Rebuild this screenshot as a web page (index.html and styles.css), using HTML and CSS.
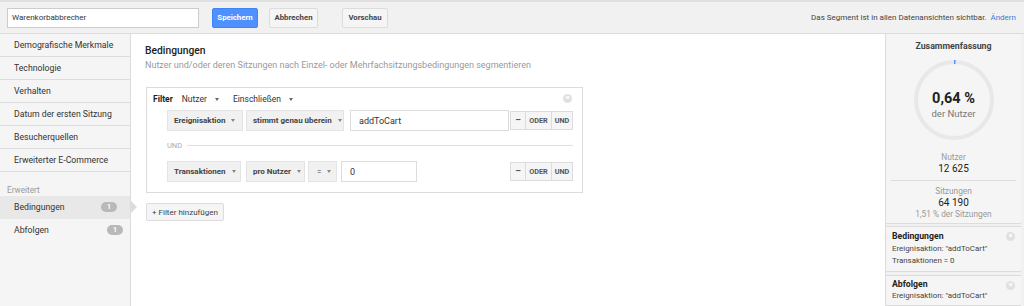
FILE: index.html
```html
<!doctype html>
<html lang="de">
  <head>
    <meta charset="UTF-8" />
    <title>Segment bearbeiten</title>
    <link rel="stylesheet" href="styles.css">
  </head>
  <body>
    <!-- Top bar -->
    <div class="topbar">
      <input type="text" class="segment-name" value="Warenkorbabbrecher" />
      <button class="btn btn-primary">Speichern</button>
      <button class="btn btn-cancel">Abbrechen</button>
      <button class="btn btn-preview">Vorschau</button>
      <div class="visibility">Das Segment ist in allen Datenansichten sichtbar. <a href="#">Ändern</a></div>
    </div>

    <div class="layout">
      <!-- Sidebar -->
      <div class="sidebar">
        <div class="nav-item">Demografische Merkmale</div>
        <div class="nav-item">Technologie</div>
        <div class="nav-item">Verhalten</div>
        <div class="nav-item">Datum der ersten Sitzung</div>
        <div class="nav-item">Besucherquellen</div>
        <div class="nav-item">Erweiterter E-Commerce</div>
        <div class="nav-group">Erweitert</div>
        <div class="nav-item nav-sub active">Bedingungen <span class="badge">1</span></div>
        <div class="nav-item nav-sub">Abfolgen <span class="badge">1</span></div>
      </div>

      <!-- Main -->
      <div class="main">
        <h2>Bedingungen</h2>
        <p class="subtitle">Nutzer und/oder deren Sitzungen nach Einzel- oder Mehrfachsitzungsbedingungen segmentieren</p>

        <div class="filter-box">
          <div class="filter-head">
            <b>Filter</b>
            <span class="dd">Nutzer <i class="caret"></i></span>
            <span class="dd">Einschließen <i class="caret"></i></span>
            <span class="close"></span>
          </div>

          <div class="cond-row">
            <span class="sel w-event">Ereignisaktion <i class="caret"></i></span>
            <span class="sel w-match">stimmt genau überein <i class="caret"></i></span>
            <input type="text" class="val val-wide" value="addToCart" />
            <div class="ops"><span class="op op-minus">–</span><span class="op">ODER</span><span class="op">UND</span></div>
          </div>

          <div class="und-sep"><span>UND</span></div>

          <div class="cond-row">
            <span class="sel w-trans">Transaktionen <i class="caret"></i></span>
            <span class="sel w-per">pro Nutzer <i class="caret"></i></span>
            <span class="sel w-eq">= <i class="caret"></i></span>
            <input type="text" class="val val-narrow" value="0" />
            <div class="ops"><span class="op op-minus">–</span><span class="op">ODER</span><span class="op">UND</span></div>
          </div>
        </div>

        <button class="btn btn-add">+ Filter hinzufügen</button>
      </div>

      <!-- Summary -->
      <div class="summary">
        <div class="summary-box">
          <div class="summary-title">Zusammenfassung</div>
          <div class="ring">
            <svg width="80" height="80" viewBox="0 0 80 80">
              <circle cx="40" cy="40" r="38" fill="none" stroke="#e8e8e8" stroke-width="4" />
              <path d="M40 2 A38 38 0 0 1 41.5 2.03" fill="none" stroke="#4d90fe" stroke-width="4" />
            </svg>
            <div class="ring-text">
              <div class="ring-value">0,64 %</div>
              <div class="ring-label">der Nutzer</div>
            </div>
          </div>
          <div class="stat">
            <div class="stat-label">Nutzer</div>
            <div class="stat-value">12 625</div>
          </div>
          <div class="stat stat-sessions">
            <div class="stat-label">Sitzungen</div>
            <div class="stat-value">64 190</div>
            <div class="stat-label">1,51 % der Sitzungen</div>
          </div>
        </div>
        <div class="card">
          <span class="close"></span>
          <b>Bedingungen</b>
          <div>Ereignisaktion: "addToCart"</div>
          <div>Transaktionen = 0</div>
        </div>
        <div class="card">
          <span class="close"></span>
          <b>Abfolgen</b>
          <div>Ereignisaktion: "addToCart"</div>
        </div>
      </div>
    </div>
  </body>
</html>
```

FILE: styles.css
```css
body {
  margin: 0;
  font-family: Roboto, Arial, sans-serif;
  font-size: 8.7px;
  color: #333;
  background: #f1f1f1;
  height: 306px;
  overflow: hidden;
}
.topbar {
  display: flex;
  align-items: center;
  height: 31px;
  padding: 0 7px;
  border-top: 2px solid #e0e0e0;
  border-bottom: 1px solid #dcdcdc;
  background: #f1f1f1;
}
.segment-name {
  width: 192px;
  height: 20px;
  box-sizing: border-box;
  border: 1px solid #ccc;
  padding: 0 4px;
  font-family: inherit;
  font-size: 8px;
  color: #333;
  margin-right: 13px;
}
.btn {
  height: 20px;
  padding: 0;
  font-family: inherit;
  font-size: 7.8px;
  font-weight: bold;
  color: #444;
  background: #f5f5f5;
  border: 1px solid #dcdcdc;
  border-radius: 2px;
  cursor: pointer;
}
.btn-primary {
  width: 46px;
  background: #4d90fe;
  border-color: #3f85f7;
  color: #fff;
  margin-right: 11px;
}
.btn-cancel {
  width: 49px;
  margin-right: 24px;
}
.btn-preview {
  width: 46px;
}
.visibility {
  margin-left: auto;
  margin-right: 1px;
  color: #444;
  font-size: 8px;
  white-space: nowrap;
}
.visibility a {
  color: #3a7ad5;
  text-decoration: none;
  margin-left: 2px;
}
.layout {
  display: flex;
  height: 272px;
}
.sidebar {
  width: 130px;
  flex: none;
  background: #f5f5f5;
  border-right: 1px solid #dcdcdc;
}
.nav-item {
  position: relative;
  height: 22px;
  line-height: 22px;
  padding: 0 14px;
  border-bottom: 1px solid #dcdcdc;
  background: #f5f5f5;
  color: #333;
  white-space: nowrap;
}
.nav-group {
  padding: 12px 7px 0;
  height: 12px;
  line-height: 12px;
  color: #999;
  font-size: 8.2px;
}
.nav-sub {
  border-bottom: none;
  height: 23px;
  line-height: 23px;
}
.nav-sub.active {
  background: #e8e8e8;
}
.nav-sub.active::after {
  content: "";
  position: absolute;
  right: -7px;
  top: 5px;
  border-left: 6px solid #dcdcdc;
  border-top: 6px solid transparent;
  border-bottom: 6px solid transparent;
}
.badge {
  position: absolute;
  right: 7px;
  top: 6px;
  width: 16px;
  height: 10px;
  line-height: 10px;
  border-radius: 5px;
  background: #b9b9b9;
  color: #fff;
  font-size: 7px;
  font-weight: bold;
  text-align: center;
}
.active .badge {
  right: 13px;
}
.main {
  flex: 1;
  background: #fff;
  padding: 10px 14px;
}
.main h2 {
  margin: 0;
  font-size: 10.3px;
  font-weight: 500;
  color: #222;
  line-height: 14px;
}
.subtitle {
  margin: 1px 0 0;
  color: #999;
  font-size: 9px;
  line-height: 13px;
}
.filter-box {
  width: 420px;
  margin: 15px 0 10px 1px;
  border: 1px solid #dcdcdc;
  padding: 5px 9px 10px 6px;
}
.filter-head {
  position: relative;
  display: flex;
  align-items: center;
  height: 12px;
  margin-bottom: 5px;
  font-size: 8.5px;
}
.filter-head b {
  color: #222;
  margin-right: 9px;
}
.dd {
  margin-right: 14px;
  color: #333;
}
.caret {
  display: inline-block;
  margin-left: 6px;
  vertical-align: middle;
  border-left: 2.5px solid transparent;
  border-right: 2.5px solid transparent;
  border-top: 3px solid #666;
}
.close {
  position: absolute;
  right: 1px;
  top: 1px;
  width: 9px;
  height: 9px;
  border-radius: 50%;
  background: #e0e0e0;
}
.close::before {
  content: "×";
  position: absolute;
  left: 0;
  right: 0;
  top: -1px;
  text-align: center;
  color: #fff;
  font-size: 8px;
  line-height: 10px;
  font-weight: bold;
}
.cond-row {
  display: flex;
  align-items: center;
  height: 21px;
  margin-left: 14px;
}
.sel {
  flex: none;
  display: flex;
  align-items: center;
  justify-content: space-between;
  box-sizing: border-box;
  height: 21px;
  padding: 0 7px 0 6px;
  background: #f1f1f1;
  border: 1px solid #e4e4e4;
  font-weight: bold;
  color: #444;
  font-size: 8px;
  white-space: nowrap;
  margin-right: 3px;
}
.sel .caret {
  border-top-color: #888;
}
.w-event { width: 76px; }
.w-match { width: 98px; }
.w-trans { width: 74px; margin-right: 5px; }
.w-per { width: 59px; }
.w-eq { width: 29px; font-weight: normal; padding-left: 8px; }
.val {
  flex: none;
  height: 21px;
  box-sizing: border-box;
  border: 1px solid #dcdcdc;
  font-family: inherit;
  font-size: 9px;
  color: #333;
  padding: 0 8px;
  margin-left: 3px;
}
.val-wide {
  width: 159px;
}
.val-narrow {
  width: 76px;
  margin-left: 1px;
}
.ops {
  display: flex;
  margin-left: auto;
}
.op {
  box-sizing: border-box;
  height: 19px;
  line-height: 17px;
  width: 21px;
  text-align: center;
  border: 1px solid #dcdcdc;
  border-left: none;
  background: #f5f5f5;
  font-weight: bold;
  font-size: 7.3px;
  color: #555;
}
.op:nth-child(2) {
  width: 26px;
}
.op-minus {
  width: 16px;
  border-left: 1px solid #dcdcdc;
  font-size: 9px;
}
.und-sep {
  display: flex;
  align-items: center;
  height: 10px;
  margin: 9px 0 11px 14px;
  color: #aaa;
  font-size: 7.5px;
}
.und-sep::after {
  content: "";
  flex: 1;
  height: 1px;
  background: #e0e0e0;
  margin-left: 5px;
}
.btn-add {
  height: 18px;
  padding: 0 5px;
  font-weight: normal;
  font-size: 8px;
  margin-left: 1px;
}
.summary {
  width: 135px;
  flex: none;
  background: #f1f1f1;
  border-left: 1px solid #dcdcdc;
  padding: 0 3px 0 0;
}
.summary-box {
  background: #f5f5f5;
  border-bottom: 1px solid #dcdcdc;
  padding: 7px 5px 3px;
  text-align: center;
}
.summary-title {
  font-weight: bold;
  color: #444;
  font-size: 8.8px;
}
.ring {
  position: relative;
  width: 80px;
  height: 80px;
  margin: 9px auto 0;
}
.ring svg {
  display: block;
}
.ring-text {
  position: absolute;
  left: 0;
  right: 0;
  top: 30px;
}
.ring-value {
  font-size: 14.5px;
  line-height: 18px;
  font-weight: bold;
  color: #222;
}
.ring-label {
  font-size: 9.5px;
  color: #777;
}
.stat {
  margin-top: 12px;
  padding-bottom: 5px;
}
.stat-sessions {
  border-top: 1px solid #dcdcdc;
  padding-top: 5px;
  margin-top: 0;
  padding-bottom: 0;
}
.stat-label {
  color: #999;
  font-size: 8.3px;
  line-height: 11px;
}
.stat-value {
  color: #222;
  font-size: 10px;
  line-height: 12px;
}
.card {
  position: relative;
  margin-top: 2px;
  padding: 3px 6px 4px;
  background: #f5f5f5;
  border-top: 1px solid #dcdcdc;
  border-bottom: 1px solid #dcdcdc;
  font-size: 7.9px;
  line-height: 12px;
  color: #444;
}
.card + .card {
  margin-top: 3px;
  line-height: 11px;
}
.card b {
  font-size: 8.7px;
  color: #222;
}
.card .close {
  right: 6px;
  top: 5px;
}
```
